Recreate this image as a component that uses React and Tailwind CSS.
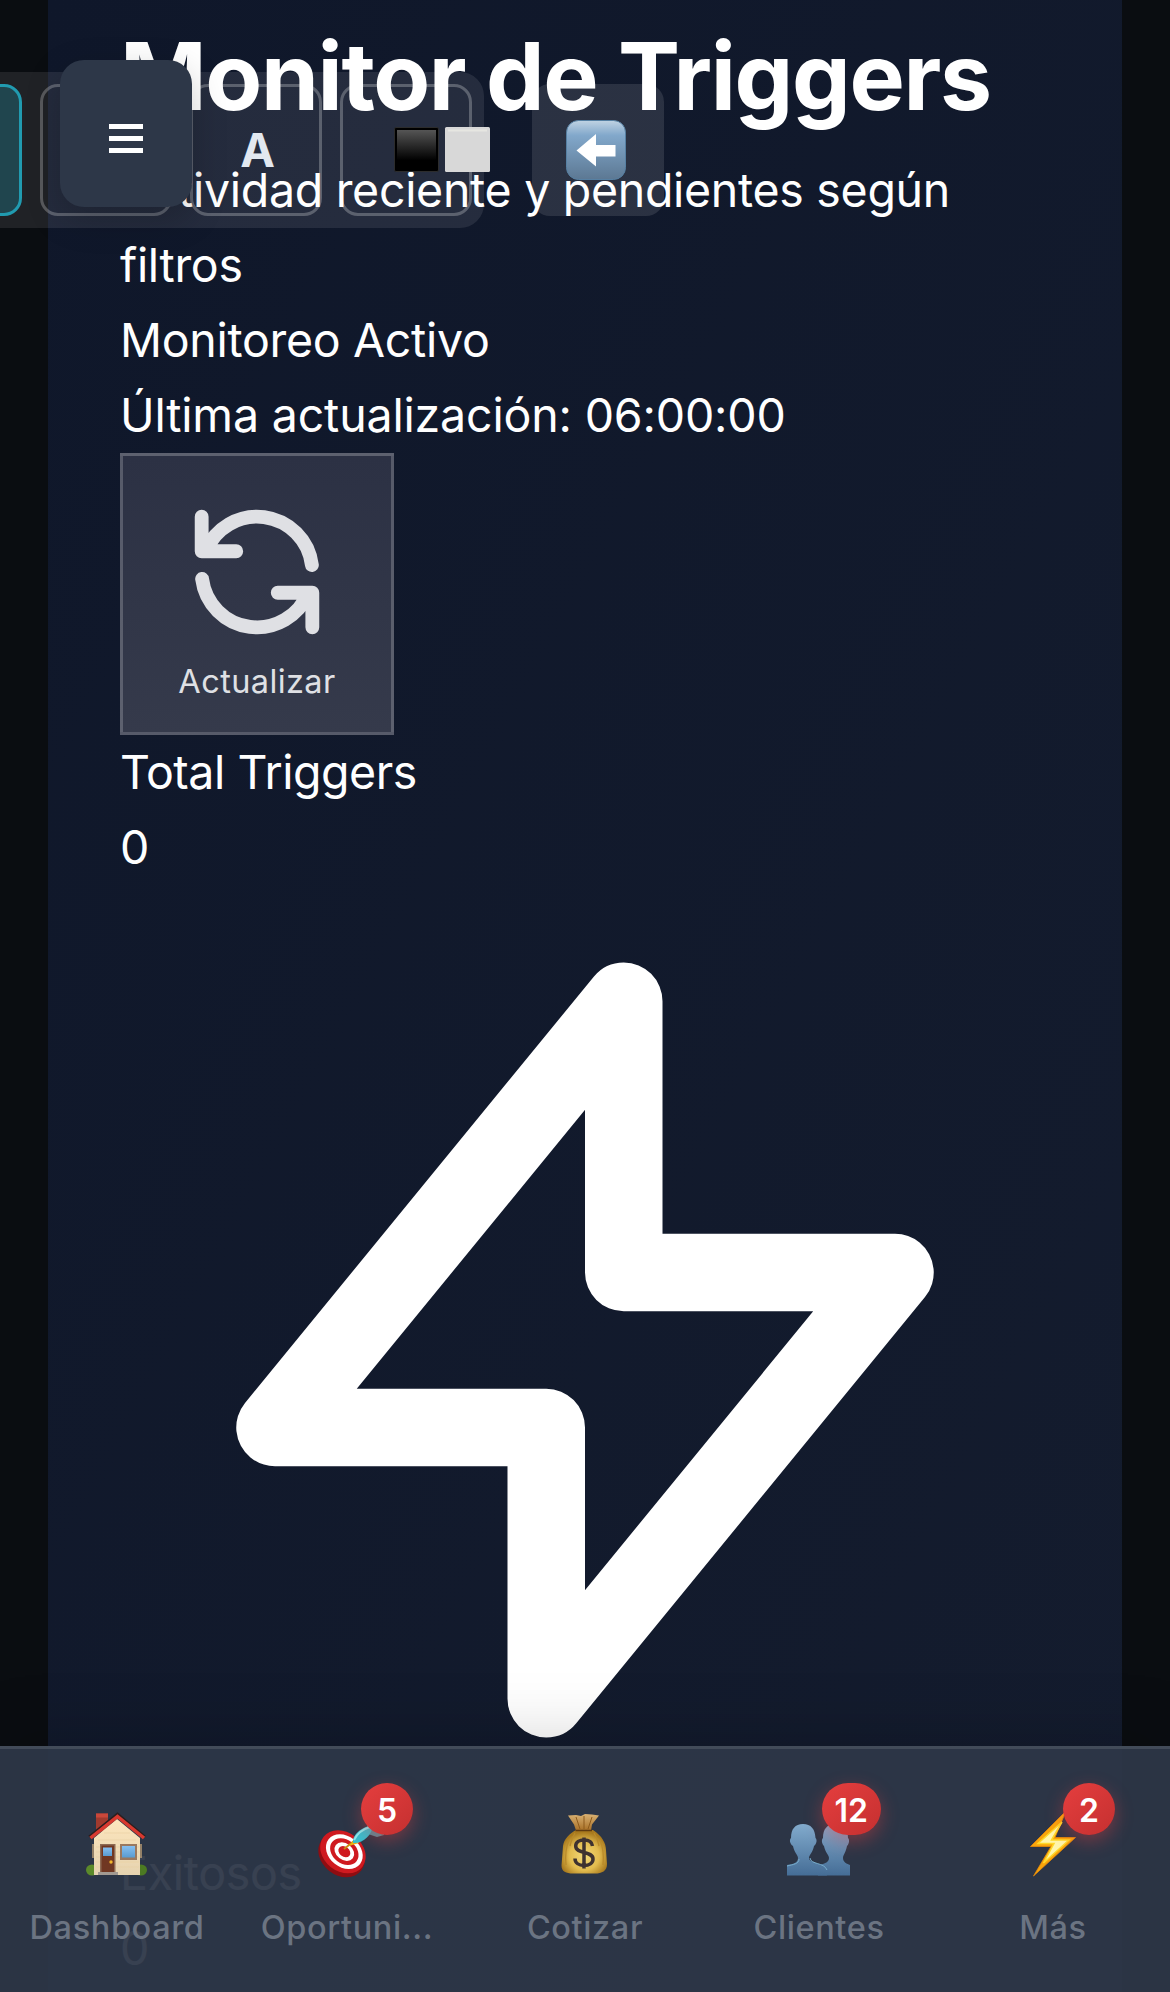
const NAV = [
  { label: "Dashboard", icon: House },
  { label: "Oportuni...", icon: Target, badge: "5", shift: "-translate-x-[4px]" },
  { label: "Cotizar", icon: MoneyBag },
  { label: "Clientes", icon: People, badge: "12" },
  { label: "Más", icon: Bolt, badge: "2" },
];

function House() {
  return (
    <svg viewBox="0 0 66 66" className="h-[66px] w-[66px]">
      <defs>
        <linearGradient id="wall" x1="0" y1="0" x2="0" y2="1">
          <stop offset="0" stopColor="#fde6bd" />
          <stop offset="1" stopColor="#e6d3b0" />
        </linearGradient>
        <linearGradient id="glass" x1="0" y1="0" x2="0" y2="1">
          <stop offset="0" stopColor="#86bff0" />
          <stop offset="1" stopColor="#5a9bd0" />
        </linearGradient>
      </defs>
      <rect x="12" y="1.500" width="12" height="18" fill="#a03a2e" />
      <rect x="12" y="1.500" width="12" height="4" fill="#c9473a" />
      <ellipse cx="8" cy="58" rx="6" ry="5.500" fill="#5b8a2a" />
      <ellipse cx="57" cy="58" rx="6" ry="5.500" fill="#4c7a22" />
      <path d="M10 26 33 7l23 19v37H10z" fill="url(#wall)" />
      <path d="M9 32v14M57 32v14" stroke="#b89b74" strokeWidth="1.500" />
      <path d="M12 35h43M12 40h43M12 45h43M12 50h43M12 55h43M14 28h38M20 21h26" stroke="#e9d1a4" strokeWidth="0.700" />
      <path d="M5 25.500 33.500 2.500 61 25.500" fill="none" stroke="#2b1e1e" strokeWidth="2" transform="translate(0 -1)" />
      <path d="M6.500 26 33.500 4.500 60 26" fill="none" stroke="#d8392f" strokeWidth="3.500" />
      <rect x="16" y="32" width="15.500" height="29" fill="#8d6a53" />
      <rect x="17.500" y="33.500" width="12.500" height="27.500" fill="#703722" />
      <rect x="19" y="35.500" width="9" height="8.500" fill="url(#glass)" />
      <circle cx="27" cy="50" r="1.700" fill="#f2b52c" />
      <rect x="36" y="32" width="17" height="16" fill="#9a785e" />
      <rect x="38" y="34" width="13" height="11.500" fill="url(#glass)" />
      <rect x="14" y="60" width="20" height="3" fill="#a29a92" />
    </svg>
  );
}

function Target() {
  return (
    <svg viewBox="0 0 66 66" className="h-[66px] w-[66px]">
      <g transform="rotate(38 24 41)">
        <ellipse cx="25" cy="43" rx="25" ry="20" fill="#8f0d12" />
        <ellipse cx="24" cy="39.500" rx="24.500" ry="19.500" fill="#cf1a20" />
        <ellipse cx="25" cy="38.500" rx="20" ry="15.500" fill="#fff" />
        <ellipse cx="25" cy="38.500" rx="15.500" ry="11.800" fill="#cf1a20" />
        <ellipse cx="25" cy="38.500" rx="10.800" ry="8.200" fill="#fff" />
        <ellipse cx="25" cy="38.500" rx="6.500" ry="5" fill="#cf1a20" />
      </g>
      <path d="m26 37 10-8" stroke="#c98a10" strokeWidth="1.800" />
      <path d="m31 34 6-8 4 5z" fill="#e8b414" />
      <path d="M49 19l1-13 8-4 1 12 10 8-10 3-9-3z" fill="#4e8e9c" />
      <path d="M35 31c-1-8 8-16 20-18-1 10-10 19-20 18z" fill="#35bfd0" />
      <path d="M36 28c3-6 9-11 16-13" fill="none" stroke="#8be9ee" strokeWidth="2" />
    </svg>
  );
}

function MoneyBag() {
  return (
    <svg viewBox="0 0 66 66" className="h-[66px] w-[66px]">
      <defs>
        <radialGradient id="bag" cx="0.5" cy="0.6" r="0.55">
          <stop offset="0" stopColor="#f3d978" />
          <stop offset="0.6" stopColor="#e2bb4e" />
          <stop offset="1" stopColor="#a97a1e" />
        </radialGradient>
        <linearGradient id="bagTop" x1="0" y1="0" x2="0" y2="1">
          <stop offset="0" stopColor="#d9b173" />
          <stop offset="1" stopColor="#a87026" />
        </linearGradient>
      </defs>
      <path d="M24 18h17c9 6 13 13 13 20l1 14c0 7-5 9.500-12 9.500H21c-7 0-11.500-2-11.500-8L11 34c1-7 6-12 13-16z" fill="url(#bag)" />
      <path d="M17 28c-3 7-4 15-3 25M23 21c-4 6-4 9-5 13M48 28c3 7 4 15 3 25M42 21c4 6 4 9 5 13" fill="none" stroke="#b98a2a" strokeWidth="1.300" />
      <path d="M16 3.500l8-.5 5 1 4-2 7 .500 7 1-7 9-1 6H24l-2-6z" fill="url(#bagTop)" />
      <path d="m24 5 4 12M32 4v13M40 5l-4 12" stroke="#8d5a1c" strokeWidth="1" />
      <path d="M23.500 18.500h16.500" stroke="#5f3a10" strokeWidth="1.500" />
      <path d="M40.500 34c-.5-4-4-6-8.500-6s-8.300 2-8.300 6c0 8.500 17.300 4.500 17.300 13 0 4.300-4 6.500-9 6.500s-9-2.500-9-7M32 25.500v31" fill="none" stroke="#3e3230" strokeWidth="3.500" />
    </svg>
  );
}

function People() {
  return (
    <svg viewBox="0 0 66 66" className="h-[66px] w-[66px]">
      <defs>
        <linearGradient id="bust" x1="0" y1="0" x2="0" y2="1">
          <stop offset="0" stopColor="#82abcd" />
          <stop offset="1" stopColor="#456d96" />
        </linearGradient>
      </defs>
      <path d="M32 63.500V53c5-1 11-2 11-7 0-3-4-6-5-12-2-2-3-6-1-8 0-9 4-14 12.500-14S62 17 62 26c2 2 1 6-1 8-1 6-4 9-4 12 0 4 4 6 7 7v10.500z" fill="url(#bust)" />
      <path d="M1 63.500V53c6-1 11-2 11-7 0-3-4-6-5-12-3-2-4-6-2-8 0-9 4-14 12-14s12 5 12.500 14c2 2 1 6-1.500 8-1 6-5 9-5 12 0 6 17 3 18 17.500z" fill="url(#bust)" />
      <path d="M1 54c6-1.500 12-2 12-7M24 46c1 7 14 4 17 12" fill="none" stroke="#7cb2d0" strokeWidth="0.900" />
    </svg>
  );
}

function Bolt() {
  return (
    <svg viewBox="0 0 66 66" className="h-[66px] w-[66px]">
      <path d="M46-1 10.500 34.500H31L13.500 64 55.500 25.500H35z" fill="#f9a50b" stroke="#e88a08" strokeWidth="0.800" />
      <path d="M42 10 18 31.500h16L23.500 51 49 28H31.500z" fill="#fff6ab" stroke="#ffd928" strokeWidth="1.500" />
    </svg>
  );
}

function Header() {
  return (
    <div className="absolute left-0 top-0 h-[240px] w-full">
      <div className="absolute -left-[140px] top-[72px] flex h-[156px] w-[624px] items-center justify-end gap-[18px] rounded-[24px] bg-white/[0.09] pr-3">
        <div className="h-[132px] w-[132px] shrink-0 rounded-[18px] border-[3px] border-[#219bb0] bg-[#22d3ee]/20" />
        <div className="h-[132px] w-[132px] shrink-0 rounded-[18px] border-[3px] border-white/25" />
        <div className="flex h-[132px] w-[132px] shrink-0 items-center justify-center rounded-[18px] border-[3px] border-white/25 pl-[3px] pt-[2px] text-[46.5px] font-bold text-[#e2e8f0]">A</div>
        <div className="flex h-[132px] w-[132px] shrink-0 items-center rounded-[18px] border-[3px] border-white/25 pl-[51px]">
          <svg viewBox="0 0 96 46" className="h-[46px] w-24 shrink-0">
            <defs>
              <linearGradient id="blk" x1="0" y1="0" x2="0" y2="1">
                <stop offset="0" stopColor="#555" />
                <stop offset="0.8" stopColor="#000" />
              </linearGradient>
            </defs>
            <rect x="0.500" y="0.500" width="44" height="44" rx="1.500" fill="#000" stroke="#2c2c2c" />
            <rect x="3" y="3" width="39" height="38" fill="url(#blk)" />
            <rect x="51" y="0" width="45" height="45" rx="1.500" fill="#d8d8d8" />
            <rect x="54" y="2.500" width="39" height="2" fill="#e6e6e1" />
          </svg>
        </div>
      </div>
      <div className="absolute left-[532px] top-[84px] flex h-[132px] w-[132px] items-center justify-center rounded-[18px] bg-white/[0.11]">
        <svg viewBox="0 0 60 60" className="-ml-1 h-[60px] w-[60px]">
          <defs>
            <linearGradient id="key" x1="0" y1="0" x2="0" y2="1">
              <stop offset="0" stopColor="#c0d3e3" />
              <stop offset="0.250" stopColor="#82a8cb" />
              <stop offset="1" stopColor="#5c7893" />
            </linearGradient>
          </defs>
          <rect x="0.500" y="0.500" width="59" height="59" rx="12" fill="url(#key)" stroke="#5680a3" />
          <path d="M10.500 30.500 30 14v11h19.500v11.500H30V46.500z" fill="#fff" />
        </svg>
      </div>
      <div className="absolute left-[60px] top-[60px] flex h-[147px] w-[132px] items-center justify-center rounded-[24px] bg-[#2d3748] shadow-[0_12px_36px_rgba(0,0,0,0.2)]">
        <div className="mt-[10px] flex w-[34px] flex-col gap-[7px]">
          <div className="h-[5px] bg-white" />
          <div className="h-[5px] bg-white" />
          <div className="h-[5px] bg-white" />
        </div>
      </div>
    </div>
  );
}

export default function App() {
  return (
    <div className="relative h-[1992px] w-[1170px] overflow-hidden bg-[#0a0d11] font-['Inter',sans-serif] text-white">
      <main className="mx-12 h-full bg-linear-to-br from-[#0f172a] to-[#141c2e] px-[72px] pt-[16px] text-[46.5px] leading-[75px] tracking-[-0.3px]">
        <h1 className="h-[137px] whitespace-nowrap text-[93px] font-bold leading-[120px] tracking-[-1.35px]">Monitor de Triggers</h1>
        <p className="h-[150px] w-[930px]">Actividad reciente y pendientes según<br />filtros</p>
        <p>Monitoreo Activo</p>
        <p className="tracking-[-0.17px]">Última actualización: 06:00:00</p>
        <button className="flex h-[282px] w-[274px] flex-col items-center border-[3px] border-white/20 bg-linear-to-b from-[#2c3144] to-[#353a4b] pt-[33px] text-[#dfe0e4]">
          <svg viewBox="0 0 24 24" fill="none" stroke="currentColor" strokeWidth="2" strokeLinecap="round" strokeLinejoin="round" className="h-[166px] w-[166px] shrink-0">
            <path d="M4 4v5h.582m15.356 2A8.001 8.001 0 0 0 4.582 9m0 0H9m11 11v-5h-.581m0 0a8.003 8.003 0 0 1-15.357-2m15.357 2H15" />
          </svg>
          <span className="-mt-[3px] text-[32.5px] leading-[60px] tracking-[0.4px]">Actualizar</span>
        </button>
        <p className="tracking-[-0.45px]">Total Triggers</p>
        <p>0</p>
        <svg viewBox="0 0 24 24" fill="none" stroke="currentColor" strokeWidth="2" strokeLinecap="round" strokeLinejoin="round" className="mb-[21px] h-[930px] w-[930px]">
          <path d="M13 10V3L4 14h7v7l9-11h-7z" />
        </svg>
        <p>Exitosos</p>
        <p>0</p>
      </main>
      <Header />
      <nav className="absolute bottom-0 left-0 grid h-[246px] w-full grid-cols-5 border-t-[3px] border-[#424b59] bg-[#2d3748]/95 shadow-[0_-12px_60px_rgba(0,0,0,0.15)]">
        {NAV.map(({ label, icon: Icon, badge, shift }) => (
          <div key={label} className="flex flex-col items-center pt-[63px]">
            <div className="relative">
              <Icon />
              {badge && (
                <span className="absolute -right-[29px] -top-[29px] flex h-[52px] min-w-[52px] items-center justify-center rounded-[26px] bg-linear-to-br from-[#e53e3e] to-[#c53030] px-[13px] pt-[4px] text-[32px] font-semibold text-white shadow-[0_6px_18px_rgba(229,62,62,0.4)]">{badge}</span>
              )}
            </div>
            <span className={`mt-[26px] text-[32.5px] font-medium leading-[48px] tracking-[0.6px] text-[#6b7482] ${shift || ""}`}>{label}</span>
          </div>
        ))}
      </nav>
    </div>
  );
}
